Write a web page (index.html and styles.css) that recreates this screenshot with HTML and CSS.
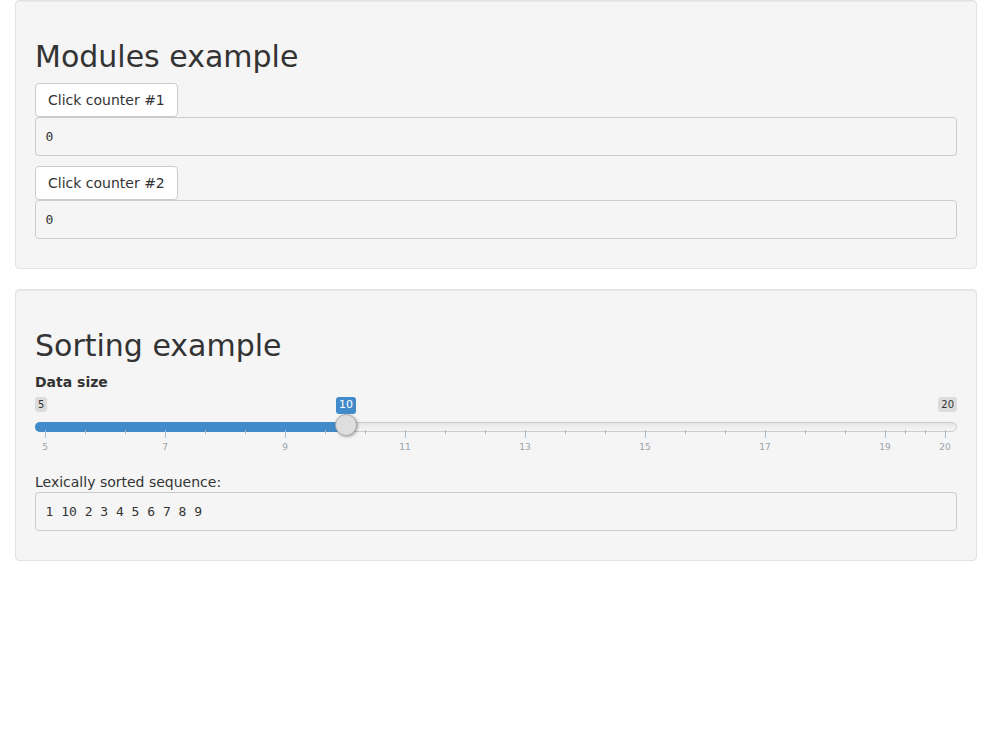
FILE: index.html
```html
<!DOCTYPE html>
<html>
<head>
<meta charset="utf-8">
<link rel="stylesheet" href="styles.css">
</head>
<body>
<div class="container">
  <div class="well">
    <h2>Modules example</h2>
    <button class="btn">Click counter #1</button>
    <pre class="out">0</pre>
    <button class="btn">Click counter #2</button>
    <pre class="out">0</pre>
  </div>
  <div class="well">
    <h2>Sorting example</h2>
    <div class="form-group">
      <label class="ctl-label">Data size</label>
      <div class="irs">
        <span class="irs-min">5</span>
        <span class="irs-max">20</span>
        <span class="irs-line"></span>
        <span class="irs-bar" style="width:312px"></span>
        <div class="irs-grid">
          <span class="pol" style="left:10px"></span>
          <span class="pol small" style="left:50px"></span>
          <span class="pol small" style="left:90px"></span>
          <span class="pol" style="left:130px"></span>
          <span class="pol small" style="left:170px"></span>
          <span class="pol small" style="left:210px"></span>
          <span class="pol" style="left:250px"></span>
          <span class="pol small" style="left:290px"></span>
          <span class="pol small" style="left:330px"></span>
          <span class="pol" style="left:370px"></span>
          <span class="pol small" style="left:410px"></span>
          <span class="pol small" style="left:450px"></span>
          <span class="pol" style="left:490px"></span>
          <span class="pol small" style="left:530px"></span>
          <span class="pol small" style="left:570px"></span>
          <span class="pol" style="left:610px"></span>
          <span class="pol small" style="left:650px"></span>
          <span class="pol small" style="left:690px"></span>
          <span class="pol" style="left:730px"></span>
          <span class="pol small" style="left:770px"></span>
          <span class="pol small" style="left:810px"></span>
          <span class="pol" style="left:850px"></span>
          <span class="pol small" style="left:870px"></span>
          <span class="pol small" style="left:890px"></span>
          <span class="pol" style="left:910px"></span>
          <span class="gtext" style="left:10px">5</span>
          <span class="gtext" style="left:130px">7</span>
          <span class="gtext" style="left:250px">9</span>
          <span class="gtext" style="left:370px">11</span>
          <span class="gtext" style="left:490px">13</span>
          <span class="gtext" style="left:610px">15</span>
          <span class="gtext" style="left:730px">17</span>
          <span class="gtext" style="left:850px">19</span>
          <span class="gtext" style="left:910px">20</span>
        </div>
        <span class="irs-handle" style="left:300px"></span>
        <span class="irs-single" style="left:311px">10</span>
      </div>
    </div>
    <div class="txt">Lexically sorted sequence:</div>
    <pre class="out">1 10 2 3 4 5 6 7 8 9</pre>
  </div>
</div>
</body>
</html>
```
FILE: styles.css
```css
html, body {
  margin: 0;
  padding: 0;
  background: #fff;
}
body {
  font-family: "DejaVu Sans", sans-serif;
  font-size: 14px;
  line-height: 1.42857143;
  color: #333;
}
.container {
  padding: 0 15px;
}
.well {
  background: #f5f5f5;
  border: 1px solid #e3e3e3;
  border-radius: 4px;
  box-shadow: inset 0 1px 1px rgba(0,0,0,.05);
  padding: 19px;
  margin-bottom: 20px;
  min-height: 20px;
}
h2 {
  font-size: 30px;
  font-weight: 500;
  line-height: 1.1;
  margin: 20px 0 10px;
  color: #333;
}
.btn {
  display: inline-block;
  font-family: "DejaVu Sans", sans-serif;
  font-size: 14px;
  line-height: 20px;
  color: #333;
  background: #fff;
  border: 1px solid #ccc;
  border-radius: 4px;
  padding: 6px 12px;
  margin: 0;
  vertical-align: top;
  cursor: pointer;
}
.out {
  display: block;
  margin: 0 0 10px;
  padding: 9.5px;
  font-family: "DejaVu Sans Mono", monospace;
  font-size: 13px;
  line-height: 18px;
  color: #333;
  background: #f5f5f5;
  border: 1px solid #ccc;
  border-radius: 4px;
  white-space: pre;
}
.form-group {
  margin-bottom: 15px;
}
.ctl-label {
  display: inline-block;
  font-weight: bold;
  margin-bottom: 5px;
}
.irs {
  position: relative;
  display: block;
  height: 60px;
  font-family: "DejaVu Sans", sans-serif;
}
.irs-line {
  position: absolute;
  left: 0;
  right: 0;
  top: 25px;
  height: 8px;
  background: linear-gradient(to bottom, #dedede -50%, #fff 150%);
  border: 1px solid #ccc;
  border-radius: 8px;
}
.irs-bar {
  position: absolute;
  left: 0;
  top: 25px;
  height: 8px;
  border-top: 1px solid #428bca;
  border-bottom: 1px solid #428bca;
  background: #428bca;
  border-radius: 8px 0 0 8px;
}
.irs-handle {
  position: absolute;
  top: 17px;
  width: 22px;
  height: 22px;
  box-sizing: border-box;
  border: 1px solid #ababab;
  background: #dedede;
  border-radius: 22px;
  box-shadow: 1px 1px 3px rgba(0,0,0,.3);
}
.irs-min, .irs-max {
  position: absolute;
  top: 0;
  padding: 1px 3px;
  background: rgba(0,0,0,.1);
  border-radius: 3px;
  font-size: 10px;
  line-height: 1.333;
  color: #333;
}
.irs-min { left: 0; }
.irs-max { right: 0; }
.irs-single {
  position: absolute;
  top: 0;
  transform: translateX(-50%);
  padding: 1px 3px;
  background: #428bca;
  color: #fff;
  border-radius: 3px;
  font-size: 11px;
  line-height: 1.333;
}
.irs-grid {
  position: absolute;
  left: 0;
  right: 0;
  bottom: 0;
  height: 27px;
}
.pol {
  position: absolute;
  top: 0;
  width: 1px;
  height: 8px;
  background: #a6bbd1;
}
.pol.small {
  height: 4px;
  background: #b4b4b4;
}
.gtext {
  position: absolute;
  bottom: 5px;
  transform: translateX(-50%);
  font-size: 9px;
  line-height: 9px;
  color: #99a4ac;
  white-space: nowrap;
}
.txt {
  margin: 0;
}
```
